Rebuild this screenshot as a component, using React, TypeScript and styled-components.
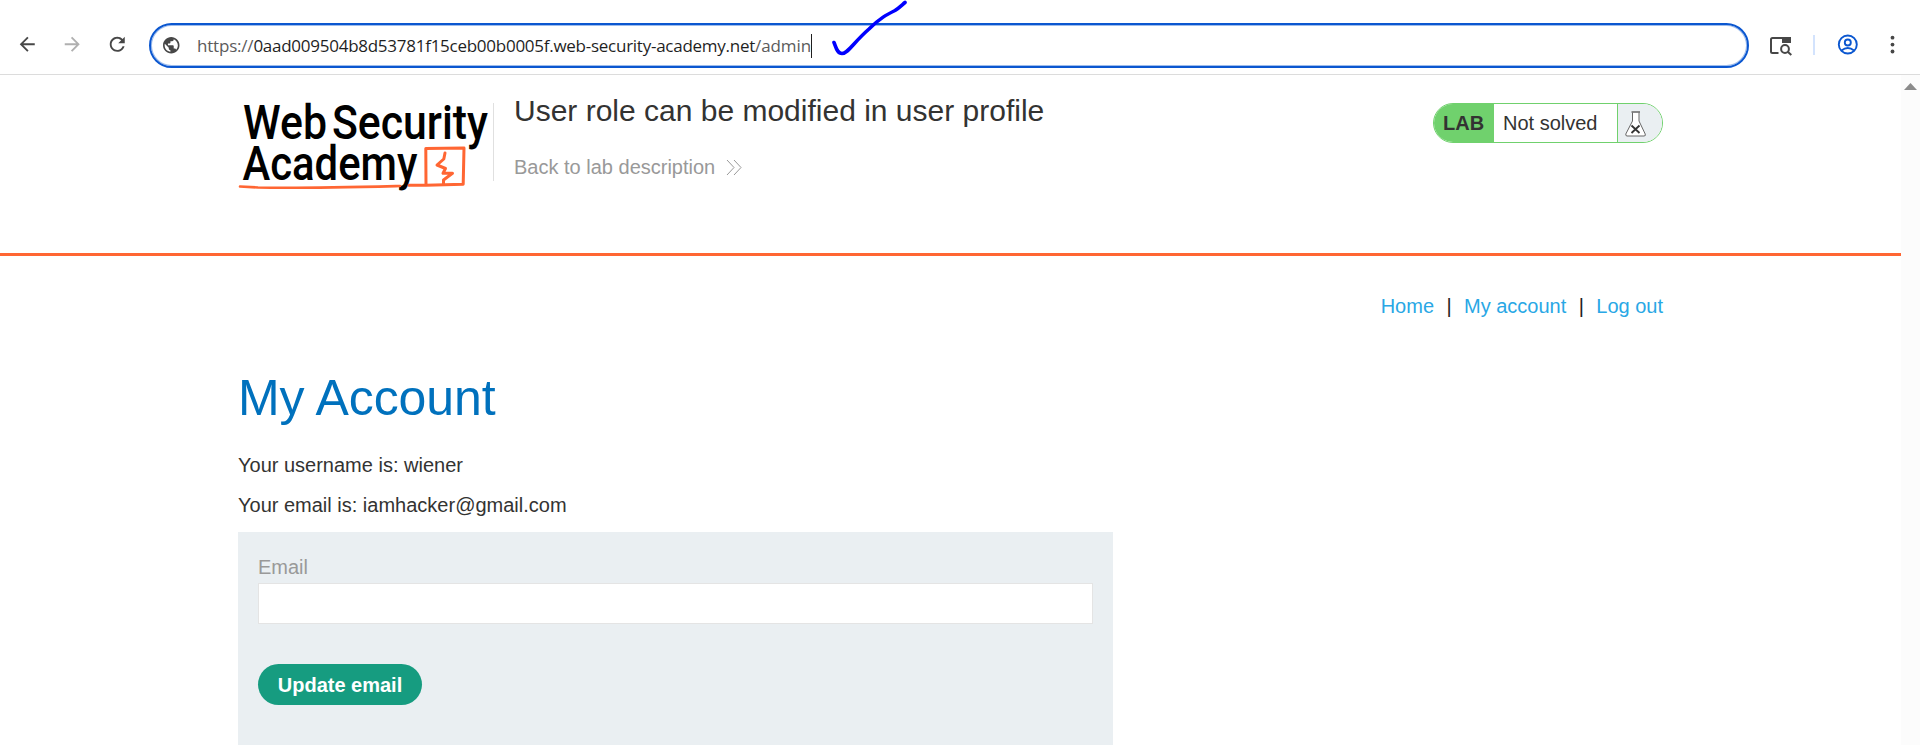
import React from "react";
import styled, { createGlobalStyle } from "styled-components";

const GlobalStyle = createGlobalStyle`
  * { box-sizing: border-box; }
  body {
    margin: 0;
    background: #fff;
    color: #333332;
    font: 20px/23px "Liberation Sans", Arial, sans-serif;
    overflow: hidden;
  }
`;

const Window = styled.div`
  display: flex;
  flex-direction: column;
  width: 1920px;
  height: 745px;
  overflow: hidden;
`;

const Toolbar = styled.header`
  position: relative;
  display: flex;
  align-items: flex-start;
  flex: none;
  height: 75px;
  border-bottom: 1px solid #dcdcdc;
`;

const NavButtons = styled.div`
  display: flex;
  flex: none;
  gap: 22.5px;
  width: 149px;
  padding: 33.25px 0 0 16.25px;
  svg { display: block; flex: none; width: 22.5px; height: 22.5px; }
`;

const AddressBar = styled.div`
  display: flex;
  flex: none;
  align-items: center;
  width: 1600px;
  height: 45px;
  margin-top: 23px;
  padding-left: 12px;
  border: 2px solid #0b57d0;
  border-radius: 23px;
  background: #fff;
  box-shadow: inset 0 0 0 1px rgba(11, 87, 208, 0.4);
`;

const Url = styled.div`
  display: flex;
  margin-left: 17.5px;
  font: 17px/24px "Open Sans", "Noto Sans", sans-serif;
  white-space: pre;
`;

const UrlPart = styled.span<{ $spacing: number; $strong?: boolean }>`
  letter-spacing: ${(p) => p.$spacing}px;
  color: ${(p) => (p.$strong ? "#1f1f1f" : "#5b5b5b")};
`;

const Caret = styled.span`
  width: 1px;
  height: 24px;
  background: #1f1f1f;
`;

const InkTick = styled.svg`
  position: absolute;
  left: 825px;
  top: 0;
`;

const ToolbarActions = styled.div`
  display: flex;
  align-items: center;
  height: 30px;
  margin-top: 30px;
  padding-left: 20px;
  svg { flex: none; }
`;

const ActionDivider = styled.span`
  flex: none;
  width: 2px;
  height: 20px;
  margin: 0 22px 0 20px;
  background: #d3e3fd;
`;

const Viewport = styled.div`
  display: flex;
  flex: 1;
  min-height: 0;
`;

const Page = styled.div`
  width: 1901px;
`;

const Scrollbar = styled.div`
  width: 19px;
  padding: 8px 0 0 3px;
  background: #fcfcfc;
  svg { display: block; }
`;

const LabHeader = styled.div`
  height: 181px;
  padding: 28px 238px 0;
  border-bottom: 3px solid #ff6633;
  display: flex;
  align-items: flex-start;
`;

const LogoBox = styled.div`
  width: 256px;
  height: 78px;
  border-right: 1px solid #e0e0e0;
  svg { display: block; overflow: visible; }
`;

const TitleBlock = styled.div`
  flex: 1;
  padding-left: 20px;
`;

const Title = styled.h2`
  margin: -9px 0 0;
  font-size: 30px;
  line-height: 34px;
  font-weight: 400;
`;

const BackLink = styled.a`
  display: flex;
  align-items: center;
  gap: 11px;
  margin-top: 28px;
  color: #999;
`;

const Badge = styled.div`
  display: flex;
  width: 230px;
  height: 40px;
  border: 1px solid #70d16d;
  border-radius: 20px;
  overflow: hidden;
  line-height: 38px;
`;

const BadgeLabel = styled.strong`
  width: 60px;
  padding-left: 9px;
  background: #70d16d;
`;

const BadgeStatus = styled.span`
  flex: 1;
  padding-left: 9px;
  border-right: 1px solid #70d16d;
`;

const BadgeIcon = styled.span`
  display: flex;
  width: 44px;
  padding: 7px 0 0 7px;
  background: #eaeff2;
`;

const Content = styled.main`
  padding: 39px 238px 0;
`;

const TopNav = styled.nav`
  display: flex;
  justify-content: flex-end;
  gap: 12.4px;
  color: #222;
`;

const NavLink = styled.a`
  color: #29a7e5;
`;

const Heading = styled.h1`
  margin: 51px 0 0;
  font-size: 50px;
  line-height: 58px;
  font-weight: 400;
  letter-spacing: -0.1px;
  color: #0071bd;
`;

const Info = styled.p`
  margin: 0 0 17px;
  &:first-of-type { margin-top: 27px; }
`;

const Form = styled.form`
  display: flex;
  flex-direction: column;
  align-items: flex-start;
  width: 875px;
  height: 240px;
  margin-top: -2px;
  padding: 24px 20px;
  background: #eaeff2;
`;

const Label = styled.label`
  color: #999;
`;

const Input = styled.input`
  width: 835px;
  height: 41px;
  margin-top: 4px;
  border: 1px solid #e4e4e4;
  background: #fff;
  outline: none;
`;

const Submit = styled.button`
  width: 164px;
  height: 41px;
  margin-top: 40px;
  padding: 0;
  border: 0;
  border-radius: 20.5px;
  background: #169c80;
  color: #fff;
  font: bold 20px/40px "Liberation Sans", Arial, sans-serif;
`;

const arrow = "M20 11H7.83l5.59-5.59L12 4l-8 8 8 8 1.41-1.41L7.83 13H20z";

const Logo = () => (
  <svg width="250" height="90" viewBox="0 0 250 90">
    <g fontFamily="Roboto, sans-serif" fontSize="48" fontWeight="500">
      <text x="5" y="36" textLength="84" lengthAdjust="spacingAndGlyphs">Web</text>
      <text x="94" y="36" textLength="156" lengthAdjust="spacingAndGlyphs">Security</text>
      <text x="4.500" y="77" textLength="175" lengthAdjust="spacingAndGlyphs">Academy</text>
    </g>
    <g fill="none" stroke="#ff6633" strokeLinejoin="round" strokeLinecap="round">
      <path d="M2 83.500L20 84.500C60 85.500 120 84 162 83" strokeWidth="2.600" />
      <path d="M171 82.300L188 82.300L187.800 45.500L226 45L225.200 81.200L188 82.300" strokeWidth="3" />
      <path d="M207 50L205.800 56L199 62L207.500 65.500L205 70.300L214.500 70.300L205.500 77L205.500 81" strokeWidth="3" />
    </g>
  </svg>
);

export default function App() {
  return (
    <Window>
      <GlobalStyle />
      <Toolbar>
        <NavButtons>
          <svg viewBox="0 0 24 24" fill="#474747"><path d={arrow} /></svg>
          <svg viewBox="0 0 24 24" fill="#b0b0b0"><path d={arrow} transform="matrix(-1 0 0 1 24 0)" /></svg>
          <svg viewBox="0 0 24 24" fill="#474747">
            <path d="M17.65 6.35C16.2 4.9 14.21 4 12 4c-4.42 0-7.99 3.58-7.99 8s3.57 8 7.99 8c3.73 0 6.84-2.55 7.73-6h-2.08c-.82 2.33-3.04 4-5.65 4-3.31 0-6-2.69-6-6s2.69-6 6-6c1.66 0 3.14.69 4.22 1.78L13 11h7V4l-2.35 2.35z" />
          </svg>
        </NavButtons>
        <AddressBar>
          <svg width="16.5" height="16.5" viewBox="2 2 20 20" fill="#474747">
            <path d="M12 2C6.48 2 2 6.48 2 12s4.48 10 10 10 10-4.48 10-10S17.52 2 12 2zm-1 17.93c-3.95-.49-7-3.85-7-7.93 0-.62.08-1.21.21-1.79L9 15v1c0 1.1.9 2 2 2v1.93zm6.9-2.54c-.26-.81-1-1.39-1.9-1.39h-1v-3c0-.55-.45-1-1-1H8v-2h2c.55 0 1-.45 1-1V7h2c1.1 0 2-.9 2-2v-.41c2.93 1.19 5 4.06 5 7.41 0 2.08-.8 3.97-2.1 5.39z" />
          </svg>
          <Url>
            <UrlPart $spacing={-0.2}>https://</UrlPart>
            <UrlPart $spacing={-0.26} $strong>0aad009504b8d53781f15ceb00b0005f.web-security-academy.net</UrlPart>
            <UrlPart $spacing={-0.1}>/admin</UrlPart>
          </Url>
          <Caret />
        </AddressBar>
        <InkTick width="90" height="60" viewBox="0 0 90 60">
          <path d="M9 42.5C11 47 12 53.500 17 53.500C23 53.500 28 43 44 29C55 18 62 14.500 70 10.500C74 8 77 5 80 2.500" fill="none" stroke="#0000fe" strokeWidth="3.600" strokeLinecap="round" />
        </InkTick>
        <ToolbarActions>
          <svg width="24" height="22" viewBox="0 0 24 22" fill="none" stroke="#474747" strokeWidth="2">
            <path d="M9.500 19H3.500Q2 19 2 17.500V5.500Q2 4 3.500 4H21V8" />
            <path d="M13 3H22V9H13z" fill="#474747" stroke="none" />
            <circle cx="16" cy="15" r="3.900" />
            <path d="M19 18L22.300 21" />
          </svg>
          <ActionDivider />
          <svg width="22" height="22" viewBox="0 0 22 22" fill="none" stroke="#0b57d0" strokeWidth="1.900">
            <circle cx="10.800" cy="10.500" r="9" />
            <circle cx="10.800" cy="8.500" r="3" />
            <path d="M4.500 16.500Q10.800 11.500 17.100 16.500" />
          </svg>
          <svg width="60" height="22" viewBox="0 0 60 22" fill="#474747">
            <circle cx="33.500" cy="3.700" r="1.900" /><circle cx="33.500" cy="10.600" r="1.900" /><circle cx="33.500" cy="17.500" r="1.900" />
          </svg>
        </ToolbarActions>
      </Toolbar>
      <Viewport>
        <Page>
          <LabHeader>
            <LogoBox><Logo /></LogoBox>
            <TitleBlock>
              <Title>User role can be modified in user profile</Title>
              <BackLink>
                Back to lab description
                <svg width="16" height="17" viewBox="0 0 16 17" fill="none" stroke="#999">
                  <path d="M1 1L8 8.500L1 16M8 1L15 8.500L8 16" />
                </svg>
              </BackLink>
            </TitleBlock>
            <Badge>
              <BadgeLabel>LAB</BadgeLabel>
              <BadgeStatus>Not solved</BadgeStatus>
              <BadgeIcon>
                <svg width="22" height="26" viewBox="0 0 22 26" fill="#fff" stroke="#666">
                  <path d="M7.500 1.500V10L.800 23Q.500 25 2 25H19Q21 25 20.200 23L14 10V1.500" />
                  <path d="M6.500 1H15" strokeWidth="1.600" />
                  <path d="M6.500 14.500L14.500 22M14.500 14.500L6.500 22" stroke="#333" strokeWidth="1.800" />
                </svg>
              </BadgeIcon>
            </Badge>
          </LabHeader>
          <Content>
            <TopNav>
              <NavLink>Home</NavLink>
              <span>|</span>
              <NavLink>My account</NavLink>
              <span>|</span>
              <NavLink>Log out</NavLink>
            </TopNav>
            <Heading>My Account</Heading>
            <Info>Your username is: wiener</Info>
            <Info>Your email is: iamhacker@gmail.com</Info>
            <Form>
              <Label htmlFor="email">Email</Label>
              <Input id="email" />
              <Submit type="button">Update email</Submit>
            </Form>
          </Content>
        </Page>
        <Scrollbar>
          <svg width="13" height="7" viewBox="0 0 13 7"><path d="M0 7L6.500 0L13 7z" fill="#8b8b8b" /></svg>
        </Scrollbar>
      </Viewport>
    </Window>
  );
}
